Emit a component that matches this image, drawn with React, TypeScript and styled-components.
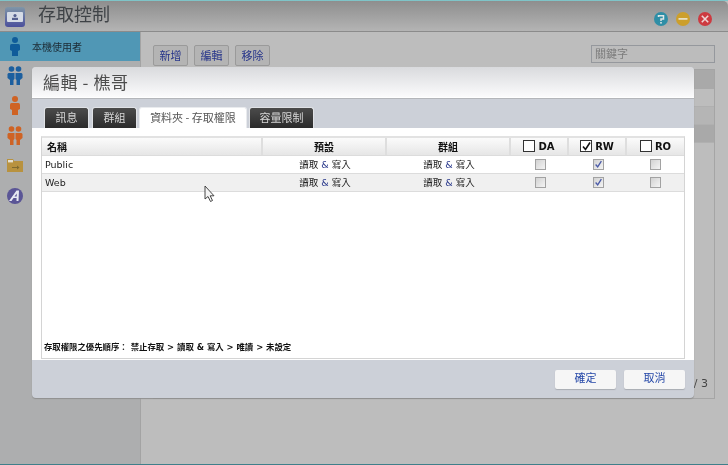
import React from "react";
import styled, { createGlobalStyle } from "styled-components";

const Global = createGlobalStyle`
  html, body { margin: 0; padding: 0; background: #bdbdbd; }
  body { font-family: "Liberation Sans", "Noto Sans CJK TC", sans-serif; overflow: hidden; }
  #root { width: 728px; height: 465px; }
`;
const cjk = `"DejaVu Sans", "Noto Sans CJK TC", sans-serif`;

const Page = styled.div`
  position: relative; width: 728px; height: 465px; display: flex; flex-direction: column;
  overflow: hidden; background: #bdbdbd; border-top: 1px solid #7fc4c8; border-bottom: 1px solid #3f7f8a;
  box-sizing: border-box; filter: blur(0.25px);
`;
const TitleBar = styled.header`
  height: 31px; flex: none; display: flex; align-items: center; padding: 0 7px 0 5px;
  background: linear-gradient(#8e8e8e, #b4b4b4); border-bottom: 1px solid #8b8b8b; box-sizing: border-box;
  border-top-right-radius: 5px;
`;
const AppIcon = styled.svg` width: 20px; height: 20px; flex: none; margin-top: 2px; `;
const AppTitle = styled.h1`
  margin: -7px 0 0 13px; font: 400 18px "Noto Sans CJK TC", sans-serif; color: #3f4347;
`;
const Controls = styled.div` margin-left: auto; display: flex; gap: 8px; margin-right: 9px; margin-top: 5px; `;
const Round = styled.span<{ $c: string }>`
  width: 14px; height: 14px; border-radius: 50%; background: ${p => p.$c};
  display: flex; align-items: center; justify-content: center;
  svg { width: 14px; height: 14px; }
`;
const Body = styled.div` flex: 1; display: flex; min-height: 0; `;
const Sidebar = styled.nav`
  width: 140px; flex: none; background: #adaeaf; border-right: 1px solid #a3a3a3;
  display: flex; flex-direction: column;
`;
const SideRow = styled.div<{ $active?: boolean }>`
  height: ${p => (p.$active ? "29px" : "30px")}; display: flex; align-items: center; gap: 9px; padding-left: 7px;
  background: ${p => (p.$active ? "#5097b5" : "transparent")};
  font: 400 10px "Noto Sans CJK TC", sans-serif; color: #1c2a33;
  svg { width: 16px; height: 20px; flex: none; }
`;
const Main = styled.main` flex: 1; padding: 13px 13px 0 12px; display: flex; flex-direction: column; min-width: 0; `;
const Toolbar = styled.div` display: flex; gap: 6px; align-items: flex-start; height: 24px; `;
const ToolButton = styled.span`
  width: 35px; height: 21px; box-sizing: border-box; border: 1px solid #9a9a9a; border-radius: 2px;
  background: #b4b4b4; color: #26348a; font: 400 11px/18px "Noto Sans CJK TC", sans-serif; text-align: center;
`;
const Search = styled.div`
  margin-left: auto; width: 124px; height: 18px; box-sizing: border-box; border: 1px solid #95989d; background: #bcbcbc;
  padding-left: 3px; font: 400 11px/15px "Noto Sans CJK TC", sans-serif; color: #7b7b7b;
`;
const Grid = styled.section`
  height: 330px; box-sizing: border-box; border: 1px solid #a5a5a5; background: #bdbdbd; display: flex; flex-direction: column;
  position: relative;
`;
const GridHead = styled.div` height: 19px; background: #a9a9a9; flex: none; `;
const GridRow = styled.div<{ $sel?: boolean; $alt?: boolean }>`
  height: 18px; flex: none; background: ${p => (p.$sel ? "#a9a9a9" : p.$alt ? "#b5b5b5" : "#bdbdbd")};
  border-bottom: 1px solid #b0b0b0; box-sizing: border-box;
`;
const Pager = styled.div`
  margin-top: auto; margin-bottom: 8px; text-align: right; padding-right: 6px; color: #444; font: 400 11px "DejaVu Sans", sans-serif;
`;
const Modal = styled.div`
  position: absolute; left: 32px; top: 66px; width: 662px; height: 331px; border-radius: 4px; overflow: hidden;
  display: flex; flex-direction: column; background: #ccd0d8; box-shadow: 0 1px 1px #8f8f8f;
`;
const ModalHead = styled.div`
  height: 31px; flex: none; box-sizing: border-box; padding-left: 11px; background: linear-gradient(#d9dadd, #fbfbfc);
  border-bottom: 1px solid #fff; font: 400 17px/29px "Noto Sans CJK TC", sans-serif; color: #4d4d4d; letter-spacing: .6px;
`;
const Tabs = styled.div`
  height: 30px; flex: none; display: flex; align-items: flex-end; padding-left: 12px; gap: 3px; box-sizing: border-box;
  border-top: 1px solid #b4b6ba;
`;
const Tab = styled.div<{ $w: number; $active?: boolean }>`
  width: ${p => p.$w}px; height: 21px; box-sizing: border-box; text-align: center;
  border-radius: 3px 3px 0 0; font: 400 11px/18px "Noto Sans CJK TC", sans-serif;
  border: 1px solid ${p => (p.$active ? "#e9ebee" : "#e0e2e6")}; border-bottom: 0;
  background: ${p => (p.$active ? "#fff" : "linear-gradient(#4b4b4b, #2b2b2b)")};
  color: ${p => (p.$active ? "#555" : "#d6d6d6")};
  margin-right: ${p => (p.$active ? "-1px" : "0")}; margin-left: ${p => (p.$active ? "-1px" : "0")};
`;
const Content = styled.div` height: 232px; flex: none; background: #fff; padding: 8px 9px 0; box-sizing: border-box; `;
const Table = styled.div`
  height: 223px; box-sizing: border-box; border: 1px solid #d4d4d4; border-top: 2px solid #e2e2e2; display: flex; flex-direction: column;
`;
const cols = "221px 124px 124px 58px 58px 57px";
const Head = styled.div`
  display: grid; grid-template-columns: ${cols}; height: 18px; flex: none;
  background: linear-gradient(#fbfbfb, #e6e6e6); border-bottom: 1px solid #dcdcdc; box-sizing: border-box;
`;
const HeadCell = styled.div<{ $left?: boolean }>`
  border-right: 2px solid #dedede; box-sizing: border-box; display: flex; align-items: center; gap: 3px;
  justify-content: ${p => (p.$left ? "flex-start" : "center")}; padding-left: ${p => (p.$left ? "5px" : "0")};
  font: 700 10px ${cjk}; color: #111; padding-bottom: 1px;
  &:last-child { border-right: 0; }
`;
const Row = styled.div<{ $alt?: boolean }>`
  display: grid; grid-template-columns: ${cols}; height: 18px; flex: none; box-sizing: border-box;
  background: ${p => (p.$alt ? "#f0f0f0" : "#fff")}; border-bottom: 1px solid #dcdcdc;
`;
const Cell = styled.div<{ $left?: boolean }>`
  display: flex; align-items: center; justify-content: ${p => (p.$left ? "flex-start" : "center")};
  padding-left: ${p => (p.$left ? "3px" : "0")}; padding-bottom: 1px; font: 400 9.5px ${cjk}; color: #222;
  b { font-weight: 400; color: #2b3a8c; margin: 0 3px; }
`;
const HeadBox = styled.span`
  width: 10px; height: 10px; border: 1px solid #333; background: #fff; position: relative; flex: none; box-sizing: content-box;
  svg { position: absolute; left: 0; top: 0; width: 11px; height: 11px; }
`;
const RowBox = styled.span`
  width: 9px; height: 9px; border: 1px solid #a2a2a2; background: linear-gradient(135deg, #d2d2d2, #f4f4f4); position: relative;
  svg { position: absolute; left: 0; top: 0; width: 9px; height: 9px; }
`;
const Note = styled.div`
  margin-top: auto; padding: 0 0 6px 2px; font: 700 8.4px ${cjk}; color: #111; white-space: pre;
`;
const ModalFoot = styled.div` flex: 1; display: flex; justify-content: flex-end; gap: 8px; padding: 10px 9px 0 0; `;
const FootButton = styled.span`
  width: 61px; height: 19px; box-sizing: border-box; background: #f6f6f6; border-radius: 2px; box-shadow: 0 1px 1px #a9acb3;
  color: #2548a8; font: 400 11px/15px "Noto Sans CJK TC", sans-serif; text-align: center;
`;
const Cursor = styled.svg` position: absolute; left: 204px; top: 184px; width: 12px; height: 18px; `;

const Check = () => (
  <svg viewBox="0 0 11 11"><path d="M2 5.5 L4.5 8.5 L9 1.5" fill="none" stroke="#4a5aa8" strokeWidth="1.6" /></svg>
);
const BlackCheck = () => (
  <svg viewBox="0 0 11 11"><path d="M2 5.5 L4.5 8.5 L9 1.5" fill="none" stroke="#111" strokeWidth="1.6" /></svg>
);
const Person = ({ c }: { c: string }) => (
  <svg viewBox="0 0 16 20">
    <circle cx="8" cy="3" r="3" fill={c} />
    <path d="M4.5 7 H11.5 Q13 7 13 9 V13 L11 14 V19 H5 V14 L3 13 V9 Q3 7 4.5 7Z" fill={c} />
  </svg>
);
const People = ({ c }: { c: string }) => (
  <svg viewBox="0 0 16 20">
    <circle cx="4.5" cy="3" r="2.8" fill={c} /><circle cx="11.5" cy="3" r="2.8" fill={c} />
    <path d="M1.5 7 H7.5 V13 L6.5 14 V19 H3 V14 L0.5 12 V8Z" fill={c} />
    <path d="M8.5 7 H14.5 L15.5 8 V12 L13 14 V19 H9.5 V14 L8.5 13Z" fill={c} />
  </svg>
);

export default function App() {
  return (
    <Page>
      <Global />
      <TitleBar>
        <AppIcon viewBox="0 0 20 20">
          <defs>
            <linearGradient id="appBg" x1="0" y1="0" x2="0" y2="1">
              <stop offset="0" stopColor="#7f96a8" />
              <stop offset="1" stopColor="#4b4f9c" />
            </linearGradient>
          </defs>
          <rect x="0" y="0" width="20" height="20" rx="3" fill="url(#appBg)" />
          <rect x="2" y="5" width="16" height="10" rx="1" fill="#d5dbe6" />
          <circle cx="10" cy="8.6" r="1.6" fill="#55608f" />
          <rect x="7" y="10.8" width="6" height="2.2" fill="#55608f" />
        </AppIcon>
        <AppTitle>存取控制</AppTitle>
        <Controls>
          <Round $c="#2f8ea6">
            <svg viewBox="0 0 14 14">
              <path d="M4.5 5 V3.8 H9.5 V7 H7 V9" fill="none" stroke="#dfe6e6" strokeWidth="1.5" />
              <rect x="6.2" y="10" width="1.6" height="1.6" fill="#dfe6e6" />
            </svg>
          </Round>
          <Round $c="#cc9f2c">
            <svg viewBox="0 0 14 14"><rect x="2.5" y="6" width="9" height="1.8" fill="#e6dfc4" /></svg>
          </Round>
          <Round $c="#cd3a40">
            <svg viewBox="0 0 14 14"><path d="M3.8 3.8 L10.2 10.2 M10.2 3.8 L3.8 10.2" stroke="#eed6d6" strokeWidth="1.6" /></svg>
          </Round>
        </Controls>
      </TitleBar>
      <Body>
        <Sidebar>
          <SideRow $active><Person c="#0f5c9a" />本機使用者</SideRow>
          <SideRow><People c="#1c5f9f" /></SideRow>
          <SideRow><Person c="#cf6324" /></SideRow>
          <SideRow><People c="#cf6324" /></SideRow>
          <SideRow>
            <svg viewBox="0 0 16 20">
              <path d="M0 3 H6 L7 5 H16 V16 H0Z" fill="#b8923f" />
              <rect x="1" y="4" width="5" height="2.4" fill="#e5e0d0" />
              <path d="M5 11 H10 V9.5 L12.5 11.5 L10 13.5 V12 H5Z" fill="#7f6a30" />
            </svg>
          </SideRow>
          <SideRow>
            <svg viewBox="0 0 16 20">
              <circle cx="8" cy="10" r="8" fill="#5a5596" />
              <path d="M2 15 L9.5 4.5 H12 L11.5 15 H9.5 L9.6 12 H6.5 L4.5 15Z M7.5 10.5 H9.7 L9.8 7.5Z" fill="#e6e8f2" fillRule="evenodd" />
            </svg>
          </SideRow>
        </Sidebar>
        <Main>
          <Toolbar>
            <ToolButton>新增</ToolButton>
            <ToolButton>編輯</ToolButton>
            <ToolButton>移除</ToolButton>
            <Search>關鍵字</Search>
          </Toolbar>
          <Grid>
            <GridHead />
            <GridRow />
            <GridRow $alt />
            <GridRow $sel />
            <Pager>/ 3</Pager>
          </Grid>
        </Main>
      </Body>
      <Modal>
        <ModalHead>編輯 - 樵哥</ModalHead>
        <Tabs>
          <Tab $w={45}>訊息</Tab>
          <Tab $w={45}>群組</Tab>
          <Tab $w={108} $active>資料夾 - 存取權限</Tab>
          <Tab $w={65}>容量限制</Tab>
        </Tabs>
        <Content>
          <Table>
            <Head>
              <HeadCell $left>名稱</HeadCell>
              <HeadCell>預設</HeadCell>
              <HeadCell>群組</HeadCell>
              <HeadCell><HeadBox />DA</HeadCell>
              <HeadCell><HeadBox><BlackCheck /></HeadBox>RW</HeadCell>
              <HeadCell><HeadBox />RO</HeadCell>
            </Head>
            {["Public", "Web"].map((n, i) => (
              <Row key={n} $alt={i === 1}>
                <Cell $left>{n}</Cell>
                <Cell>讀取<b>&amp;</b>寫入</Cell>
                <Cell>讀取<b>&amp;</b>寫入</Cell>
                <Cell><RowBox /></Cell>
                <Cell><RowBox><Check /></RowBox></Cell>
                <Cell><RowBox /></Cell>
              </Row>
            ))}
            <Note>存取權限之優先順序： 禁止存取 &gt; 讀取 &amp; 寫入 &gt; 唯讀 &gt; 未設定</Note>
          </Table>
        </Content>
        <ModalFoot>
          <FootButton>確定</FootButton>
          <FootButton>取消</FootButton>
        </ModalFoot>
      </Modal>
      <Cursor viewBox="0 0 12 18">
        <path d="M1 1 V14 L4 11.5 L6.5 16.5 L8.5 15.5 L6.2 10.8 H10Z" fill="#f4f4f4" stroke="#333" strokeWidth="0.9" />
      </Cursor>
    </Page>
  );
}
